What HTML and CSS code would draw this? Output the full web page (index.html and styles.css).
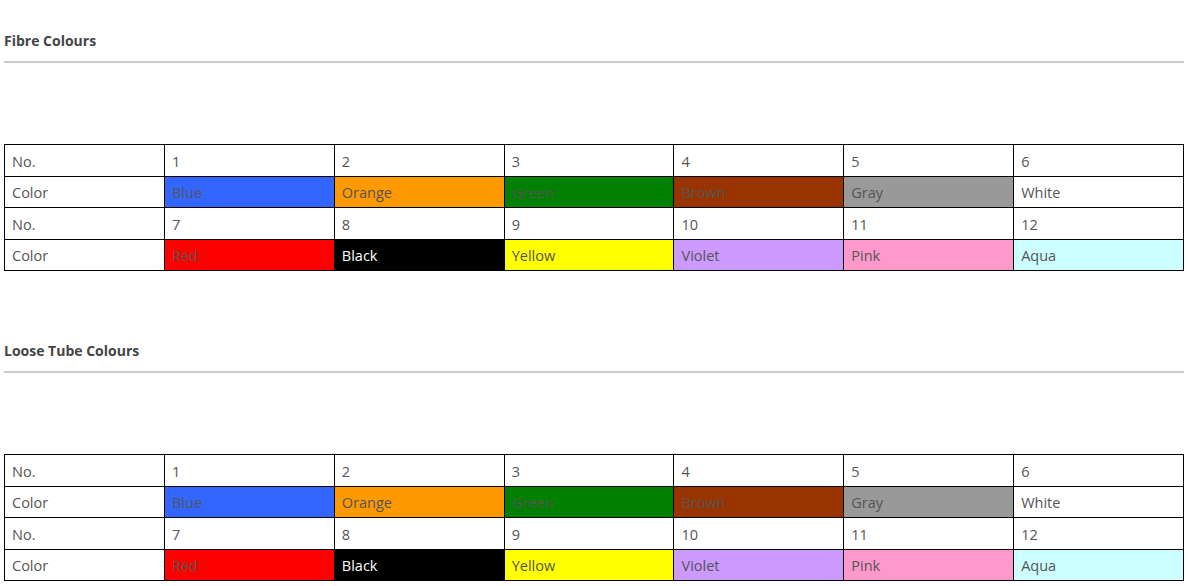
FILE: index.html
```html
<!DOCTYPE html>
<html lang="en">
<head>
<meta charset="utf-8">
<title>Fibre Colours</title>
<link rel="stylesheet" href="styles.css">
</head>
<body>
<section class="section">
  <h3 class="title">Fibre Colours</h3>
  <table class="colors">
    <colgroup><col class="c-label"><col><col><col><col><col><col></colgroup>
    <tr><td>No.</td><td>1</td><td>2</td><td>3</td><td>4</td><td>5</td><td>6</td></tr>
    <tr><td>Color</td><td class="blue">Blue</td><td class="orange">Orange</td><td class="green">Green</td><td class="brown">Brown</td><td class="gray">Gray</td><td class="white">White</td></tr>
    <tr><td>No.</td><td>7</td><td>8</td><td>9</td><td>10</td><td>11</td><td>12</td></tr>
    <tr><td>Color</td><td class="red">Red</td><td class="black">Black</td><td class="yellow">Yellow</td><td class="violet">Violet</td><td class="pink">Pink</td><td class="aqua">Aqua</td></tr>
  </table>
</section>
<section class="section">
  <h3 class="title">Loose Tube Colours</h3>
  <table class="colors">
    <colgroup><col class="c-label"><col><col><col><col><col><col></colgroup>
    <tr><td>No.</td><td>1</td><td>2</td><td>3</td><td>4</td><td>5</td><td>6</td></tr>
    <tr><td>Color</td><td class="blue">Blue</td><td class="orange">Orange</td><td class="green">Green</td><td class="brown">Brown</td><td class="gray">Gray</td><td class="white">White</td></tr>
    <tr><td>No.</td><td>7</td><td>8</td><td>9</td><td>10</td><td>11</td><td>12</td></tr>
    <tr><td>Color</td><td class="red">Red</td><td class="black">Black</td><td class="yellow">Yellow</td><td class="violet">Violet</td><td class="pink">Pink</td><td class="aqua">Aqua</td></tr>
  </table>
</section>
</body>
</html>
```
FILE: styles.css
```css
html, body {
  margin: 0;
  padding: 0;
  background: #fff;
}
body {
  padding: 0 4px;
  font-family: "Open Sans", "Liberation Sans", sans-serif;
  font-size: 14px;
  color: #555;
}
.section {
  padding-top: 30px;
  margin-bottom: 39px;
}
.section:last-child {
  margin-bottom: 0;
}
.title {
  margin: 0;
  font-size: 14px;
  font-weight: 700;
  color: #444;
  line-height: 20px;
  padding-top: 1px;
  padding-bottom: 10px;
  border-bottom: 2px solid #ccc;
}
.colors {
  margin-top: 81px;
  width: 1180px;
  border-collapse: collapse;
  table-layout: fixed;
}
.c-label { width: 160px; }
.colors td {
  border: 1px solid #000;
  padding: 3px 7px 0;
  height: 27.5px;
  font-size: 14.5px;
  line-height: 20px;
  vertical-align: middle;
  white-space: nowrap;
}
.blue { background: #3366ff; }
.orange { background: #ff9900; }
.green { background: #008000; }
.brown { background: #993300; }
.gray { background: #999999; }
.white { background: #ffffff; }
.red { background: #ff0000; }
.black { background: #000000; color: #fff; }
.yellow { background: #ffff00; }
.violet { background: #cc99ff; }
.pink { background: #ff99cc; }
.aqua { background: #ccffff; }
```
